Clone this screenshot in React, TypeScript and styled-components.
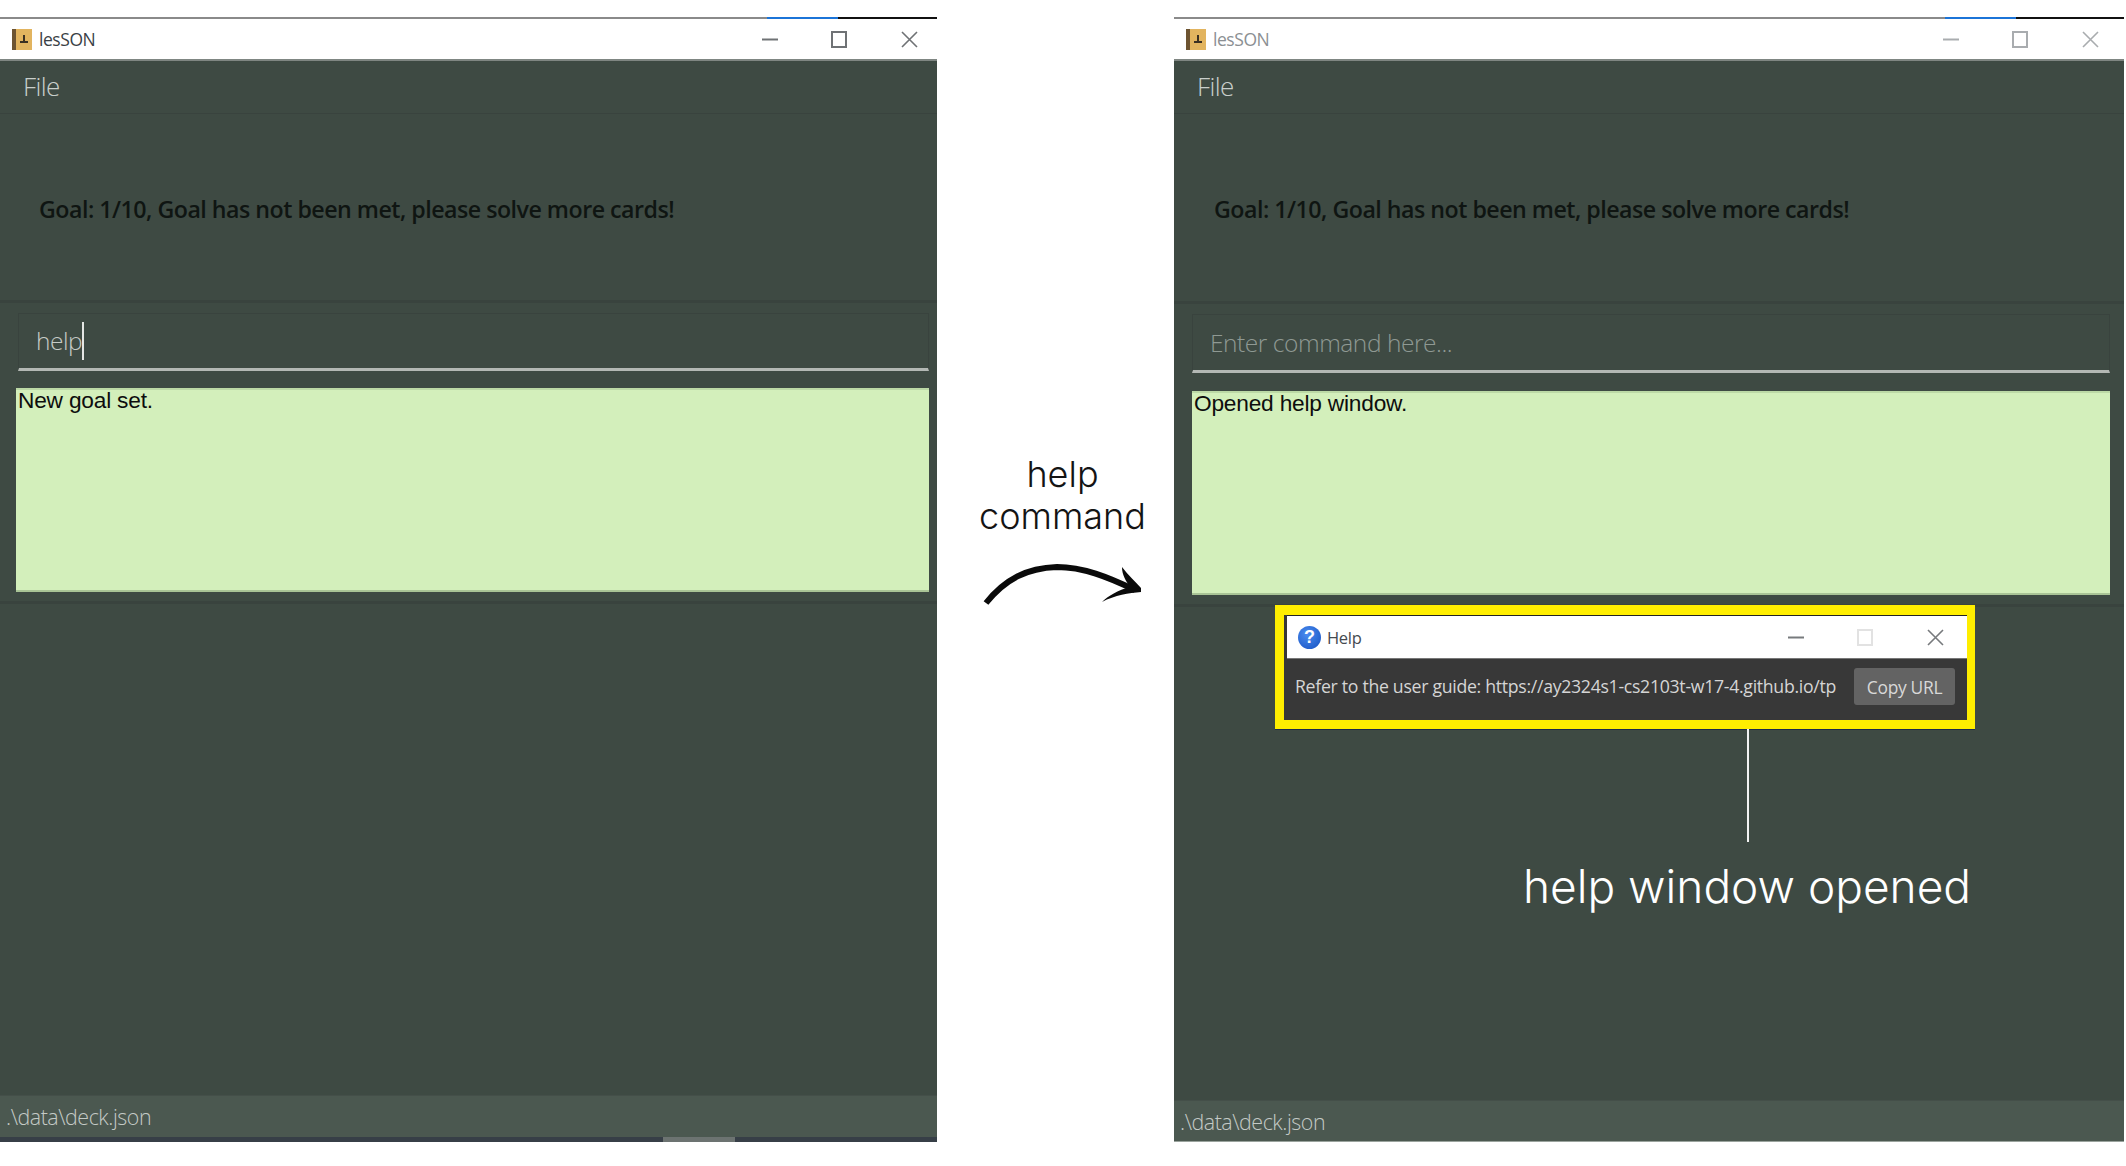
import React from 'react';
import styled, { createGlobalStyle } from 'styled-components';

const GlobalStyle = createGlobalStyle`
  html, body {
    margin: 0;
    padding: 0;
    background: #ffffff;
  }
  body {
    font-family: 'Open Sans', 'Liberation Sans', sans-serif;
  }
`;

const Page = styled.div`
  width: 2126px;
  height: 1166px;
  padding-top: 17px;
  box-sizing: border-box;
  display: flex;
  overflow: hidden;
`;

const Window = styled.div<{ $width: number }>`
  position: relative;
  width: ${(p) => p.$width}px;
  height: 1125px;
  display: flex;
  flex-direction: column;
  flex-shrink: 0;
  background: #3e4a43;
`;

const AccentLine = styled.div<{ $blueFrom: number; $blueWidth: number }>`
  height: 2px;
  flex-shrink: 0;
  background: linear-gradient(
    to right,
    #8a8a8a ${(p) => p.$blueFrom}px,
    #1b74d8 ${(p) => p.$blueFrom}px,
    #1b74d8 ${(p) => p.$blueFrom + p.$blueWidth}px,
    #111111 ${(p) => p.$blueFrom + p.$blueWidth}px
  );
`;

const TitleBar = styled.div`
  height: 42px;
  flex-shrink: 0;
  box-sizing: border-box;
  display: flex;
  align-items: center;
  background: #ffffff;
  border-bottom: 2px solid #7f8682;
  padding-left: 12px;
`;

const TitleText = styled.span<{ $faded?: boolean }>`
  margin-left: 7px;
  font-size: 17.5px;
  letter-spacing: -0.45px;
  color: ${(p) => (p.$faded ? '#8b8f93' : '#3a3f46')};
`;

const Controls = styled.div<{ $right: number }>`
  margin-left: auto;
  margin-right: ${(p) => p.$right}px;
  display: flex;
  align-items: center;
  gap: 53px;
`;

const MenuBar = styled.div`
  height: 53px;
  flex-shrink: 0;
  box-sizing: border-box;
  display: flex;
  align-items: center;
  padding-left: 23px;
  padding-bottom: 2px;
  border-bottom: 1px solid #39433e;
  font-size: 26px;
  letter-spacing: -0.6px;
  font-weight: 300;
  color: #c9cfcb;
`;

const GoalPanel = styled.div<{ $height: number; $left: number }>`
  height: ${(p) => p.$height}px;
  flex-shrink: 0;
  box-sizing: border-box;
  display: flex;
  align-items: center;
  padding-left: ${(p) => p.$left}px;
  padding-top: 3px;
  border-bottom: 3px solid #39433e;
  font-size: 23.2px;
  font-weight: 600;
  letter-spacing: -0.5px;
  color: #0f1512;
`;

const CommandRow = styled.div<{ $height: number; $right: number }>`
  height: ${(p) => p.$height}px;
  flex-shrink: 0;
  box-sizing: border-box;
  padding: 10px ${(p) => p.$right}px 0 18px;
`;

const CommandBox = styled.div<{ $height: number }>`
  height: ${(p) => p.$height}px;
  box-sizing: border-box;
  display: flex;
  align-items: center;
  padding-left: 17px;
  border: 1px solid #39433e;
  border-bottom: 3px solid #b3b8b4;
  font-size: 24.5px;
  font-weight: 300;
  letter-spacing: -0.45px;
`;

const CommandText = styled.span`
  color: #c6cbc7;
  border-right: 2px solid #e4e6e4;
  line-height: 38px;
`;

const Placeholder = styled.span`
  color: #8f9993;
`;

const ResultRow = styled.div<{ $left: number; $right: number }>`
  padding: 0 ${(p) => p.$right}px 9px ${(p) => p.$left}px;
  flex-shrink: 0;
  border-bottom: 3px solid #39433e;
`;

const ResultBox = styled.div`
  height: 204px;
  box-sizing: border-box;
  padding: 0 2px;
  background: #d3efbb;
  border-top: 2px solid #bcd9a6;
  border-bottom: 2px solid #a9c496;
  font-family: 'Liberation Sans', Arial, sans-serif;
  font-size: 22.7px;
  letter-spacing: -0.2px;
  line-height: 21px;
  color: #0d0d0d;
`;

const Filler = styled.div`
  flex: 1;
`;

const StatusBar = styled.div<{ $height: number }>`
  height: ${(p) => p.$height}px;
  flex-shrink: 0;
  box-sizing: border-box;
  display: flex;
  align-items: center;
  padding-left: 6px;
  background: #4b5850;
  border-top: 1px solid #444f49;
  font-size: 21.4px;
  font-weight: 300;
  letter-spacing: -0.45px;
  color: #c4cac6;
`;

const BottomEdge = styled.div<{ $plain?: boolean }>`
  height: ${(p) => (p.$plain ? 1 : 5)}px;
  flex-shrink: 0;
  background: ${(p) =>
    p.$plain
      ? '#9aa39d'
      : 'linear-gradient(to right, #373f47 663px, #6c7371 663px, #6c7371 735px, #373f47 735px)'};
`;

const Gutter = styled.div`
  width: 237px;
  flex-shrink: 0;
  display: flex;
  flex-direction: column;
  align-items: center;
  padding: 436px 0 0 14px;
  box-sizing: border-box;
`;

const Caption = styled.div`
  font-family: Inter, Lato, sans-serif;
  font-weight: 300;
  font-size: 36px;
  line-height: 42px;
  text-align: center;
  white-space: nowrap;
  color: #141414;
`;

const CurvedArrow = styled.svg`
  display: block;
  margin-top: 26px;
`;

const Callout = styled.div`
  position: absolute;
  left: 101px;
  top: 588px;
  width: 700px;
  display: flex;
  flex-direction: column;
`;

const HelpFrame = styled.div`
  height: 124px;
  box-sizing: border-box;
  border-style: solid;
  border-color: #ffee00;
  border-width: 10px 8px 9px 9px;
  box-shadow: 0 1px 0 #1c2b4a;
  display: flex;
  flex-direction: column;
  background: #383838;
`;

const HelpTitle = styled.div`
  height: 44px;
  flex-shrink: 0;
  box-sizing: border-box;
  display: flex;
  align-items: center;
  margin-left: 3px;
  padding-left: 11px;
  background: #ffffff;
  border-top: 1px solid #222222;
  border-bottom: 1px solid #777777;
`;

const HelpBadge = styled.span`
  width: 23px;
  height: 23px;
  border-radius: 50%;
  display: flex;
  align-items: center;
  justify-content: center;
  background: radial-gradient(circle at 40% 35%, #4a8df0, #1650c0);
  color: #ffffff;
  font-family: 'Liberation Sans', sans-serif;
  font-weight: 700;
  font-size: 18px;
`;

const HelpName = styled.span`
  margin-left: 6px;
  font-size: 16.5px;
  letter-spacing: -0.3px;
  color: #454a50;
`;

const HelpBody = styled.div`
  flex: 1;
  display: flex;
  align-items: flex-start;
  padding: 9px 12px 0 11px;
  font-size: 17.7px;
  letter-spacing: -0.3px;
  color: #d5d5d5;
`;

const HelpLabel = styled.span`
  line-height: 37px;
  white-space: nowrap;
`;

const CopyButton = styled.button`
  margin-left: auto;
  width: 101px;
  height: 37px;
  padding: 0;
  border: none;
  border-radius: 3px;
  background: #636363;
  color: #d8d8d8;
  font-family: inherit;
  font-size: 17.4px;
  letter-spacing: -0.3px;
`;

const Leader = styled.div`
  width: 2px;
  height: 113px;
  margin-left: 472px;
  background: #f2f2f2;
`;

const CalloutText = styled.div`
  margin-top: 16px;
  margin-left: 248px;
  font-family: Inter, Lato, sans-serif;
  font-weight: 300;
  font-size: 46px;
  line-height: 56px;
  white-space: nowrap;
  color: #ffffff;
`;

const AppIcon = () => (
  <svg width="20" height="21" viewBox="0 0 20 21">
    <rect x="0" y="0" width="20" height="21" fill="#e2b45f" />
    <rect x="0" y="0" width="4" height="21" fill="#6d5431" />
    <rect x="11" y="6" width="2" height="6" fill="#3b3022" />
    <rect x="8" y="12" width="8" height="2" fill="#3b3022" />
  </svg>
);

const WindowControls = ({
  color,
  maxColor,
  right,
}: {
  color: string;
  maxColor?: string;
  right: number;
}) => (
  <Controls $right={right}>
    <svg width="16" height="16" viewBox="0 0 16 16">
      <path d="M0 8.5h16" stroke={color} strokeWidth="2" />
    </svg>
    <svg width="17" height="17" viewBox="0 0 17 17" fill="none">
      <rect x="1" y="1" width="14" height="15" stroke={maxColor || color} strokeWidth="2" />
    </svg>
    <svg width="17" height="17" viewBox="0 0 17 17" fill="none">
      <path d="M1 1l15 15M16 1L1 16" stroke={color} strokeWidth="1.6" />
    </svg>
  </Controls>
);

const App: React.FC = () => (
  <>
    <GlobalStyle />
    <Page>
      <Window $width={937}>
        <AccentLine $blueFrom={767} $blueWidth={71} />
        <TitleBar>
          <AppIcon />
          <TitleText>lesSON</TitleText>
          <WindowControls color="#6f7275" right={19} />
        </TitleBar>
        <MenuBar>File</MenuBar>
        <GoalPanel $height={189} $left={39}>
          Goal: 1/10, Goal has not been met, please solve more cards!
        </GoalPanel>
        <CommandRow $height={85} $right={8}>
          <CommandBox $height={58}>
            <CommandText>help</CommandText>
          </CommandBox>
        </CommandRow>
        <ResultRow $left={16} $right={8}>
          <ResultBox>New goal set.</ResultBox>
        </ResultRow>
        <Filler />
        <StatusBar $height={42}>.\data\deck.json</StatusBar>
        <BottomEdge />
      </Window>

      <Gutter>
        <Caption>
          help
          <br />
          command
        </Caption>
        <CurvedArrow width="160" height="44" viewBox="0 0 160 44">
          <path
            d="M3 40C22 16 44 5 74 4c26 0 51 10 78 23"
            fill="none"
            stroke="#0a0a0a"
            strokeWidth="6"
          />
          <path
            d="M139 4c6 8 13 14 19 21v4c-12 1-26 3-39 10 6-6 16-12 28-15-4-6-8-12-8-20z"
            fill="#0a0a0a"
          />
        </CurvedArrow>
      </Gutter>

      <Window $width={950}>
        <AccentLine $blueFrom={771} $blueWidth={71} />
        <TitleBar>
          <AppIcon />
          <TitleText $faded>lesSON</TitleText>
          <WindowControls color="#a9acaf" right={25} />
        </TitleBar>
        <MenuBar>File</MenuBar>
        <GoalPanel $height={190} $left={40}>
          Goal: 1/10, Goal has not been met, please solve more cards!
        </GoalPanel>
        <CommandRow $height={87} $right={14}>
          <CommandBox $height={59}>
            <Placeholder>Enter command here...</Placeholder>
          </CommandBox>
        </CommandRow>
        <ResultRow $left={18} $right={14}>
          <ResultBox>Opened help window.</ResultBox>
        </ResultRow>
        <Filler />
        <StatusBar $height={41}>.\data\deck.json</StatusBar>
        <BottomEdge $plain />
        <Callout>
          <HelpFrame>
            <HelpTitle>
              <HelpBadge>?</HelpBadge>
              <HelpName>Help</HelpName>
              <WindowControls color="#777a7d" maxColor="#e2e2e2" right={23} />
            </HelpTitle>
            <HelpBody>
              <HelpLabel>
                Refer to the user guide: https://ay2324s1-cs2103t-w17-4.github.io/tp
              </HelpLabel>
              <CopyButton>Copy URL</CopyButton>
            </HelpBody>
          </HelpFrame>
          <Leader />
          <CalloutText>help window opened</CalloutText>
        </Callout>
      </Window>
    </Page>
  </>
);

export default App;
